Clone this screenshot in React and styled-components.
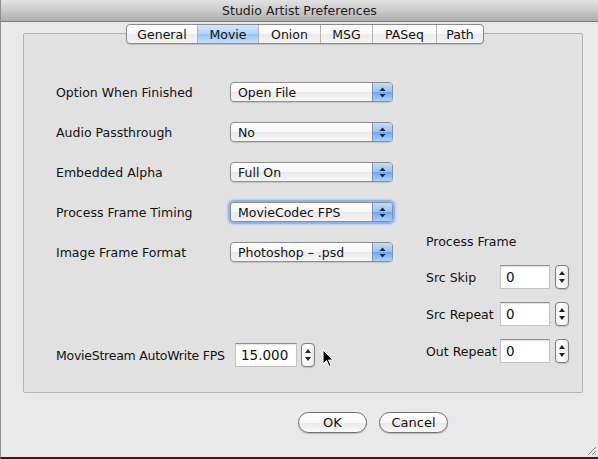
import React from 'react'
import styled, { createGlobalStyle } from 'styled-components'

const GlobalStyle = createGlobalStyle`
  html, body {
    margin: 0;
    padding: 0;
    background: #2b1d1d;
  }
  body {
    font-family: "DejaVu Sans", "Liberation Sans", sans-serif;
    color: #111;
  }
`

const Window = styled.div`
  position: relative;
  width: 598px;
  height: 459px;
  box-sizing: border-box;
  display: flex;
  flex-direction: column;
  background: #e9e9e9;
  border-left: 1px solid #8f8f8f;
  border-bottom: 2px solid #2b1d1d;
  overflow: hidden;
`

const TitleBar = styled.div`
  height: 22px;
  box-sizing: border-box;
  display: flex;
  align-items: center;
  justify-content: center;
  font-size: 12.5px;
  color: #1c1c1c;
  background: linear-gradient(#e2e2e2 0%, #cbcbcb 50%, #adadad 100%);
  border-bottom: 1px solid #7c7c7c;
`

const Body = styled.div`
  flex: 1;
  display: flex;
  flex-direction: column;
  padding: 2px 15px 0 22px;
`

const Tabs = styled.div`
  align-self: center;
  display: flex;
  height: 20px;
  box-sizing: border-box;
  border: 1px solid #8a8a8a;
  border-radius: 4px;
  overflow: hidden;
  position: relative;
  z-index: 1;
  margin-left: 4px;
  background: linear-gradient(#ffffff 0%, #f7f7f7 50%, #ebebeb 51%, #f4f4f4 100%);
  box-shadow: 0 1px 1px rgba(0, 0, 0, 0.15);
`

const Tab = styled.div`
  width: ${p => p.$w}px;
  display: flex;
  align-items: center;
  justify-content: center;
  font-size: 12.5px;
  border-left: ${p => (p.$first ? 'none' : '1px solid #b4b4b4')};
  background: ${p =>
    p.$active
      ? 'linear-gradient(#d3e6fb 0%, #b3d3f6 50%, #98c3f2 51%, #c4e0fb 100%)'
      : 'transparent'};
`

const Group = styled.div`
  margin-top: -11px;
  height: 360px;
  box-sizing: border-box;
  border: 1px solid #b3b3b3;
  border-radius: 2px;
  background: #e1e1e1;
  display: grid;
  grid-template-columns: 402px 1fr;
`

const LeftCol = styled.div`
  display: flex;
  flex-direction: column;
  padding: 48px 0 25px 32px;
`

const Rows = styled.div`
  display: flex;
  flex-direction: column;
  gap: 20px;
`

const Row = styled.div`
  display: flex;
  align-items: center;
  height: ${p => p.$h || 20}px;
`

const Label = styled.div`
  width: ${p => p.$w}px;
  font-size: 12.5px;
  letter-spacing: ${p => (p.$tight ? '-0.25px' : 'normal')};
  white-space: nowrap;
`

const Popup = styled.div`
  width: 163px;
  height: 20px;
  box-sizing: border-box;
  display: flex;
  align-items: center;
  border: 1px solid #8d8d8d;
  border-radius: 4px;
  background: linear-gradient(#ffffff 0%, #f6f6f6 50%, #e9e9e9 51%, #f5f5f5 100%);
  box-shadow: ${p =>
    p.$focus
      ? '0 0 0 2px #8fb4e6, 0 0 2px 3px #b5cff1'
      : '0 1px 1px rgba(0, 0, 0, 0.12)'};
  font-size: 12.5px;
  padding-left: 7px;
  overflow: hidden;
`

const PopupText = styled.span`
  flex: 1;
`

const PopupArrows = styled.div`
  width: 19px;
  align-self: stretch;
  display: flex;
  align-items: center;
  justify-content: center;
  border-left: 1px solid #6e8fbb;
  background: linear-gradient(#c3dbf8 0%, #98c0f1 50%, #6ba6ed 51%, #acd2fb 100%);
`

const BottomRow = styled(Row)`
  margin-top: auto;
`

const RightCol = styled.div`
  display: flex;
  flex-direction: column;
  padding-top: 200px;
`

const Heading = styled.div`
  font-size: 12.5px;
  height: 16px;
  line-height: 16px;
  margin-bottom: 15px;
`

const RightRows = styled.div`
  display: flex;
  flex-direction: column;
  gap: 13px;
`

const Field = styled.div`
  width: ${p => p.$w}px;
  height: 24px;
  box-sizing: border-box;
  display: flex;
  align-items: center;
  padding-left: 5px;
  font-size: 13.5px;
  background: #fff;
  border: 1px solid #c3c3c3;
  border-top-color: #8e8e8e;
  box-shadow: inset 0 1px 1px rgba(0, 0, 0, 0.12);
`

const Stepper = styled.div`
  margin-left: ${p => p.$gap}px;
  width: 14px;
  height: 24px;
  box-sizing: border-box;
  border: 1px solid #7f7f7f;
  border-radius: 4px;
  background: linear-gradient(90deg, #f4f4f4, #ffffff 50%, #e6e6e6);
  display: flex;
  flex-direction: column;
  align-items: center;
  justify-content: space-evenly;
  box-shadow: 0 1px 1px rgba(0, 0, 0, 0.15);
`

const Tri = styled.span`
  width: 0;
  height: 0;
  border-left: 3px solid transparent;
  border-right: 3px solid transparent;
  ${p => (p.$down ? 'border-top: 4px solid #222;' : 'border-bottom: 4px solid #222;')}
`

const Footer = styled.div`
  display: flex;
  gap: 12px;
  padding: 19px 0 0 275px;
`

const Button = styled.div`
  width: 69px;
  height: 21px;
  box-sizing: border-box;
  display: flex;
  align-items: center;
  justify-content: center;
  font-size: 13px;
  border: 1px solid #6f6f6f;
  border-radius: 11px;
  background: linear-gradient(#ffffff 0%, #f7f7f7 50%, #e8e8e8 51%, #fafafa 100%);
  box-shadow: 0 1px 1px rgba(0, 0, 0, 0.2);
`

const Cursor = styled.svg`
  position: absolute;
  left: 321px;
  top: 349px;
`

const Grip = styled.svg`
  position: absolute;
  right: 1px;
  bottom: 1px;
`

const PopupArrowIcon = () => (
  <svg width="7" height="11" viewBox="0 0 7 11">
    <path d="M3.5 0.5 L6.5 4 L0.5 4 Z" fill="#1a2a44" />
    <path d="M3.5 10.5 L6.5 7 L0.5 7 Z" fill="#1a2a44" />
  </svg>
)

const SmallStepper = ({ gap = 5 }) => (
  <Stepper $gap={gap}>
    <Tri />
    <Tri $down />
  </Stepper>
)

const popups = [
  { label: 'Option When Finished', value: 'Open File' },
  { label: 'Audio Passthrough', value: 'No' },
  { label: 'Embedded Alpha', value: 'Full On' },
  { label: 'Process Frame Timing', value: 'MovieCodec FPS', focus: true },
  { label: 'Image Frame Format', value: 'Photoshop – .psd' },
]

const frameRows = ['Src Skip', 'Src Repeat', 'Out Repeat']

const tabs = [
  { name: 'General', w: 70 },
  { name: 'Movie', w: 60, active: true },
  { name: 'Onion', w: 61 },
  { name: 'MSG', w: 51 },
  { name: 'PASeq', w: 63 },
  { name: 'Path', w: 46 },
]

const App = () => (
  <>
    <GlobalStyle />
    <Window>
      <TitleBar>Studio Artist Preferences</TitleBar>
      <Body>
        <Tabs>
          {tabs.map((t, i) => (
            <Tab key={t.name} $w={t.w} $first={i === 0} $active={t.active}>
              {t.name}
            </Tab>
          ))}
        </Tabs>
        <Group>
          <LeftCol>
            <Rows>
              {popups.map(p => (
                <Row key={p.label}>
                  <Label $w={174}>{p.label}</Label>
                  <Popup $focus={p.focus}>
                    <PopupText>{p.value}</PopupText>
                    <PopupArrows>
                      <PopupArrowIcon />
                    </PopupArrows>
                  </Popup>
                </Row>
              ))}
            </Rows>
            <BottomRow $h={24}>
              <Label $w={179} $tight>MovieStream AutoWrite FPS</Label>
              <Field $w={62}>15.000</Field>
              <SmallStepper gap={4} />
            </BottomRow>
          </LeftCol>
          <RightCol>
            <Heading>Process Frame</Heading>
            <RightRows>
              {frameRows.map(r => (
                <Row key={r} $h={24}>
                  <Label $w={74}>{r}</Label>
                  <Field $w={50}>0</Field>
                  <SmallStepper gap={5} />
                </Row>
              ))}
            </RightRows>
          </RightCol>
        </Group>
        <Footer>
          <Button>OK</Button>
          <Button>Cancel</Button>
        </Footer>
      </Body>
      <Cursor width="12" height="19" viewBox="0 0 12 19">
        <path
          d="M1 1 L1 15 L4.5 11.5 L7 17.5 L9 16.6 L6.6 11 L11 11 Z"
          fill="#000"
          stroke="#fff"
          strokeWidth="1"
        />
      </Cursor>
      <Grip width="12" height="12" viewBox="0 0 12 12">
        <path d="M11 3 L3 11 M11 7 L7 11 M11 10 L10 11" stroke="#8a8a8a" strokeWidth="1" />
      </Grip>
    </Window>
  </>
)

export default App
